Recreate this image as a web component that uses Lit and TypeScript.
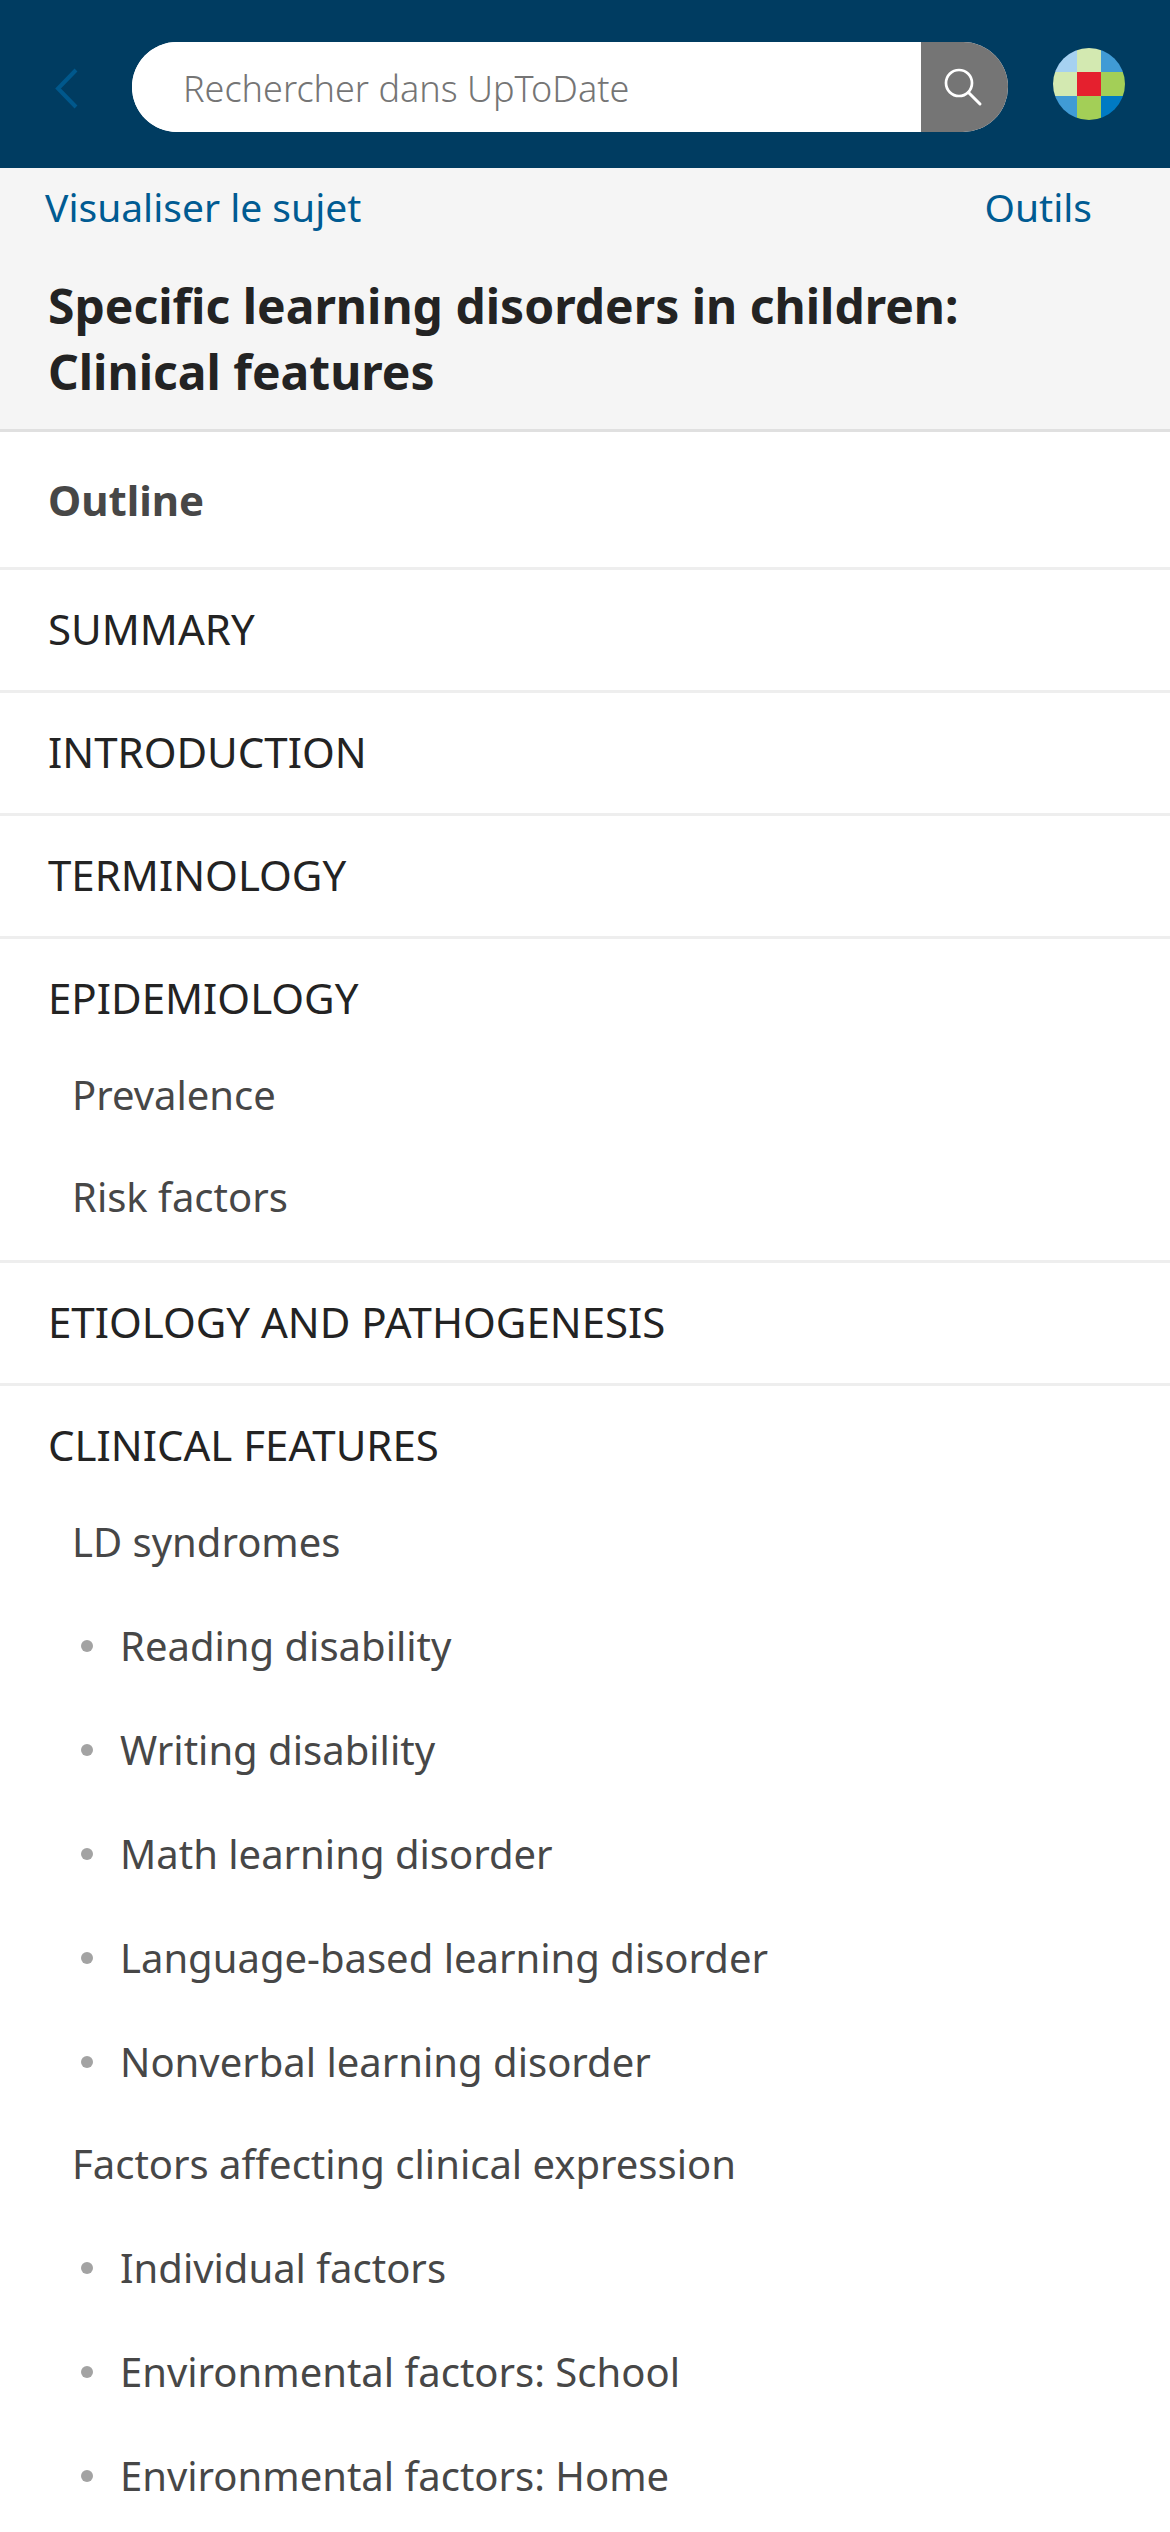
import { LitElement, html, css, nothing } from "lit";
import { customElement, state } from "lit/decorators.js";

interface Topic {
  label: string;
  bullet?: boolean;
}

interface Section {
  label: string;
  topics?: Topic[];
}

const SECTIONS: Section[] = [
  { label: "SUMMARY" },
  { label: "INTRODUCTION" },
  { label: "TERMINOLOGY" },
  {
    label: "EPIDEMIOLOGY",
    topics: [{ label: "Prevalence" }, { label: "Risk factors" }],
  },
  { label: "ETIOLOGY AND PATHOGENESIS" },
  {
    label: "CLINICAL FEATURES",
    topics: [
      { label: "LD syndromes" },
      { label: "Reading disability", bullet: true },
      { label: "Writing disability", bullet: true },
      { label: "Math learning disorder", bullet: true },
      { label: "Language-based learning disorder", bullet: true },
      { label: "Nonverbal learning disorder", bullet: true },
      { label: "Factors affecting clinical expression" },
      { label: "Individual factors", bullet: true },
      { label: "Environmental factors: School", bullet: true },
      { label: "Environmental factors: Home", bullet: true },
    ],
  },
];

@customElement("topic-header")
export class TopicHeader extends LitElement {
  @state() private query = "";

  static styles = css`
    :host {
      display: block;
    }
    .bar {
      display: flex;
      align-items: center;
      padding: 42px 45px 36px 48px;
      background: #003c61;
    }
    .back {
      display: flex;
      padding: 0;
      border: 0;
      background: none;
      cursor: pointer;
    }
    .search {
      display: flex;
      flex: 1;
      height: 90px;
      margin: 0 45px 0 48px;
      overflow: hidden;
      border-radius: 45px;
      background: #fff;
    }
    .field {
      flex: 1;
      min-width: 0;
      padding: 2px 51px 0;
      border: 0;
      outline: 0;
      background: #fff;
      color: #232323;
      font: 300 36px "Noto Sans", sans-serif;
    }
    .field::placeholder {
      color: #757575;
      opacity: 1;
    }
    .submit {
      display: flex;
      width: 87px;
      padding: 24px 0 0 21px;
      border: 0;
      background: #757575;
      cursor: pointer;
    }
    .brand {
      display: flex;
    }
  `;

  render() {
    return html`
      <header class="bar">
        <button class="back" type="button" aria-label="Retour">
          <svg width="36" height="48" viewBox="0 0 36 48" fill="none">
            <path d="M28 7 10 25.500 28 44" stroke="#00588c" stroke-width="4" />
          </svg>
        </button>
        <form class="search" role="search" @submit=${(e: Event) => e.preventDefault()}>
          <input
            class="field"
            type="text"
            aria-label="Rechercher dans UpToDate"
            placeholder="Rechercher dans UpToDate"
            .value=${this.query}
            @input=${(e: Event) => (this.query = (e.target as HTMLInputElement).value)}
          />
          <button class="submit" type="submit" aria-label="Rechercher">
            <svg width="42" height="42" viewBox="0 0 42 42" fill="none" stroke="#fff">
              <circle cx="17" cy="17" r="13" stroke-width="2.700" />
              <path d="M26.500 26.500 38 38" stroke-width="3" stroke-linecap="round" />
            </svg>
          </button>
        </form>
        <a class="brand" href="#" aria-label="UpToDate">
          <svg width="72" height="78" viewBox="0 0 72 78">
            <clipPath id="disc"><circle cx="36" cy="36" r="36" /></clipPath>
            <g clip-path="url(#disc)" shape-rendering="crispEdges">
              <rect width="24" height="24" fill="#a6d1f1" />
              <rect x="24" width="24" height="24" fill="#d3e9b1" />
              <rect x="48" width="24" height="24" fill="#409bd5" />
              <rect y="24" width="24" height="24" fill="#d3e9b1" />
              <rect x="24" y="24" width="24" height="24" fill="#e5202e" />
              <rect x="48" y="24" width="24" height="24" fill="#a3cf57" />
              <rect y="48" width="24" height="24" fill="#409bd5" />
              <rect x="24" y="48" width="24" height="24" fill="#a3cf57" />
              <rect x="48" y="48" width="24" height="24" fill="#007ac3" />
            </g>
          </svg>
        </a>
      </header>
    `;
  }
}

@customElement("topic-outline")
export class TopicOutline extends LitElement {
  static styles = css`
    :host {
      display: block;
      color: #474747;
    }
    .heading {
      margin: 0;
      padding: 39px 48px;
      font-size: 42px;
      font-weight: 700;
      line-height: 57px;
    }
    .sections,
    .topics {
      margin: 0;
      padding: 0;
      list-style: none;
    }
    .section {
      border-top: 3px solid #eee;
    }
    .link {
      color: inherit;
      text-decoration: none;
    }
    .title {
      display: block;
      padding: 30px 48px 33px;
      color: #232323;
      font-size: 42px;
      line-height: 57px;
    }
    .topics {
      margin-top: -15px;
      padding: 0 48px 12px 72px;
      font-size: 40px;
      line-height: 54px;
    }
    .section:last-child .topics {
      padding-bottom: 0;
    }
    .topic {
      padding: 24px 0;
    }
    .bulleted {
      display: flex;
      align-items: center;
      gap: 27px;
      padding: 26px 0 24px 9px;
    }
    .bulleted::before {
      content: "";
      width: 12px;
      height: 12px;
      border-radius: 50%;
      background: #a3a3a3;
    }
  `;

  private renderSection(section: Section) {
    return html`
      <li class="section">
        <a class="link title" href="#">${section.label}</a>
        ${section.topics
          ? html`<ul class="topics">
              ${section.topics.map(
                (t) => html`<li class=${t.bullet ? "bulleted" : "topic"}>
                  <a class="link" href="#">${t.label}</a>
                </li>`
              )}
            </ul>`
          : nothing}
      </li>
    `;
  }

  render() {
    return html`
      <nav aria-labelledby="outline">
        <h2 class="heading" id="outline">Outline</h2>
        <ul class="sections">
          ${SECTIONS.map((s) => this.renderSection(s))}
        </ul>
      </nav>
    `;
  }
}

@customElement("app-root")
export class AppRoot extends LitElement {
  static styles = css`
    :host {
      display: block;
      background: #fff;
      font-family: "Noto Sans", sans-serif;
    }
    .intro {
      border-bottom: 3px solid #e0e0e0;
      background: #f5f5f5;
    }
    .tools {
      display: flex;
      justify-content: space-between;
      padding: 12px 78px 0 45px;
    }
    .tool {
      color: #005b92;
      font-size: 39px;
      line-height: 54px;
      text-decoration: none;
    }
    .title {
      margin: 0;
      padding: 39px 48px 24px;
      color: #232323;
      font-size: 48px;
      font-weight: 700;
      line-height: 66px;
    }
  `;

  render() {
    return html`
      <topic-header></topic-header>
      <main>
        <section class="intro">
          <div class="tools">
            <a class="tool" href="#">Visualiser le sujet</a>
            <a class="tool" href="#">Outils</a>
          </div>
          <h1 class="title">Specific learning disorders in children: Clinical features</h1>
        </section>
        <topic-outline></topic-outline>
      </main>
    `;
  }
}
